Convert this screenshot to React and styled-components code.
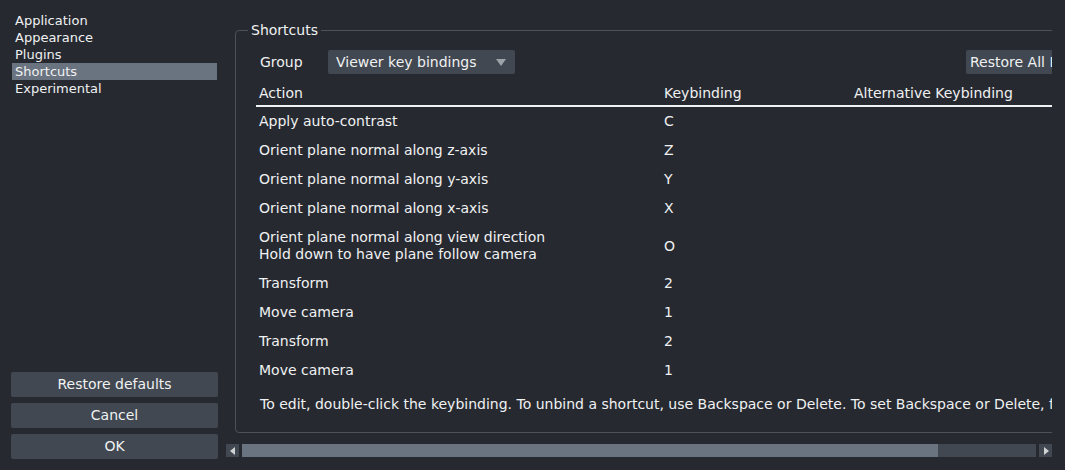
import React from 'react';
import styled, { createGlobalStyle } from 'styled-components';

const Global = createGlobalStyle`
  body {
    margin: 0;
    background: #262930;
    color: #f0f1f2;
    font-family: "DejaVu Sans", "Liberation Sans", sans-serif;
    font-size: 14px;
    line-height: 17px;
  }
`

const Window = styled.div`
  display: flex;
  width: 1065px;
  height: 470px;
  overflow: hidden;
`

const Sidebar = styled.div`
  width: 207px;
  padding: 12px 0 11px 11px;
  display: flex;
  flex-direction: column;
  justify-content: space-between;
`

const PageList = styled.ul`
  list-style: none;
  margin: 0;
  padding: 0 1px;
  font-size: 13px;
`

const PageItem = styled.li`
  height: 17px;
  padding-left: 3px;
  background: ${p => (p.$active ? '#6a7380' : 'transparent')};
`

const ButtonStack = styled.div`
  display: flex;
  flex-direction: column;
  gap: 6px;
`

const Button = styled.button`
  height: 25px;
  border: none;
  border-radius: 2px;
  background: #414851;
  color: #f0f1f2;
  font: inherit;
  padding: 0 4px;
  white-space: nowrap;
`

const ScrollArea = styled.div`
  width: 826px;
  margin: 0 0 13px 8px;
  display: flex;
  flex-direction: column;
`

const Viewport = styled.div`
  flex: 1;
  overflow: hidden;
  padding: 22px 0 0 9px;
`

const GroupBox = styled.fieldset`
  margin: 0;
  width: 870px;
  min-width: 0;
  border: 1px solid #4c525b;
  border-radius: 4px;
  padding: 2px 0 19px 20px;
`

const Legend = styled.legend`
  padding: 0 3px;
  margin-left: -8px;
`

const TopRow = styled.div`
  display: flex;
  align-items: center;
  margin-top: 9px;
`

const Label = styled.span`
  margin-left: 4px;
  width: 68px;
`

const Combo = styled.div`
  width: 187px;
  height: 24px;
  box-sizing: border-box;
  padding: 0 8px;
  background: #414851;
  border-radius: 2px;
  display: flex;
  align-items: center;
  justify-content: space-between;
`

const Arrow = styled.span`
  width: 0;
  height: 0;
  border-left: 5px solid transparent;
  border-right: 5px solid transparent;
  border-top: 7px solid #9ea3a9;
  margin-right: 1px;
`

const RestoreAll = styled(Button)`
  height: 24px;
  margin-left: auto;
  width: 160px;
  text-align: left;
`

const Table = styled.table`
  width: 855px;
  border-collapse: collapse;
  margin-top: 8px;
  table-layout: fixed;
`

const Th = styled.th`
  text-align: left;
  font-weight: normal;
  padding: 3px;
  border-bottom: 2px solid #f0f1f2;
  width: ${p => p.$w || 'auto'};
`

const Td = styled.td`
  padding: 6px 3px;
  vertical-align: middle;
`

const Footer = styled.div`
  margin: 11px 0 0 4px;
  white-space: nowrap;
`

const HScroll = styled.div`
  height: 13px;
  display: flex;
  gap: 3px;
`

const ArrowButton = styled.div`
  width: 13px;
  height: 13px;
  background: #414851;
  display: flex;
  align-items: center;
  justify-content: center;
`

const Track = styled.div`
  flex: 1;
  background: #414851;
  display: flex;
`

const Handle = styled.div`
  width: ${p => p.$w}px;
  background: #6a7380;
`

const pages = ['Application', 'Appearance', 'Plugins', 'Shortcuts', 'Experimental'];

const rows = [
  [['Apply auto-contrast'], 'C'],
  [['Orient plane normal along z-axis'], 'Z'],
  [['Orient plane normal along y-axis'], 'Y'],
  [['Orient plane normal along x-axis'], 'X'],
  [['Orient plane normal along view direction', 'Hold down to have plane follow camera'], 'O'],
  [['Transform'], '2'],
  [['Move camera'], '1'],
  [['Transform'], '2'],
  [['Move camera'], '1'],
];

const Tri = ({ dir }) => (
  <svg width="6" height="8" viewBox="0 0 6 8">
    <path d={dir === 'left' ? 'M5 0 L0 4 L5 8 Z' : 'M1 0 L6 4 L1 8 Z'} fill="#d1d2d4" />
  </svg>
);

export default function App() {
  return (
    <Window>
      <Global />
      <Sidebar>
        <PageList>
          {pages.map(p => (
            <PageItem key={p} $active={p === 'Shortcuts'}>{p}</PageItem>
          ))}
        </PageList>
        <ButtonStack>
          <Button>Restore defaults</Button>
          <Button>Cancel</Button>
          <Button>OK</Button>
        </ButtonStack>
      </Sidebar>
      <ScrollArea>
        <Viewport>
          <GroupBox>
            <Legend>Shortcuts</Legend>
            <TopRow>
              <Label>Group</Label>
              <Combo>
                Viewer key bindings
                <Arrow />
              </Combo>
              <RestoreAll>Restore All Defaults</RestoreAll>
            </TopRow>
            <Table>
              <thead>
                <tr>
                  <Th $w="399px">Action</Th>
                  <Th $w="184px">Keybinding</Th>
                  <Th>Alternative Keybinding</Th>
                </tr>
              </thead>
              <tbody>
                {rows.map(([lines, key], i) => (
                  <tr key={i}>
                    <Td>{lines.map(l => <div key={l}>{l}</div>)}</Td>
                    <Td>{key}</Td>
                    <Td />
                  </tr>
                ))}
              </tbody>
            </Table>
            <Footer>
              To edit, double-click the keybinding. To unbind a shortcut, use Backspace or Delete. To set Backspace or Delete, first unbind.
            </Footer>
          </GroupBox>
        </Viewport>
        <HScroll>
          <ArrowButton><Tri dir="left" /></ArrowButton>
          <Track><Handle $w={696} /></Track>
          <ArrowButton><Tri dir="right" /></ArrowButton>
        </HScroll>
      </ScrollArea>
    </Window>
  );
}
